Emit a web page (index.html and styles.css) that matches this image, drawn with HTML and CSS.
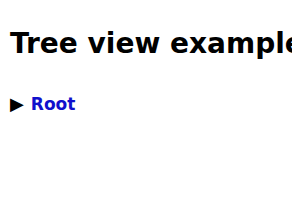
FILE: index.html
```html
<!DOCTYPE html>
<html lang="en">
<head>
    <meta charset="utf-8">
    <title>Tree view</title>
    <link rel="stylesheet" href="styles.css">
</head>
<body>
    <h1>Tree view example</h1>

    <ul class="tree">
        <li><span class="caret">Root</span></li>
    </ul>
</body>
</html>
```

FILE: styles.css
```css
body {
    margin: 8px;
    font-family: "DejaVu Sans", sans-serif;
    color: #000;
    background: #fff;
    overflow: hidden;
    white-space: nowrap;
}
h1 {
    font-size: 28px;
    font-weight: bold;
    line-height: 32px;
    margin: 20px 0 0 2px;
}
.tree {
    list-style: none;
    margin: 34px 0 0;
    padding: 0 0 0 2px;
}
.caret {
    font-size: 17px;
    font-weight: bold;
    color: #1010cc;
    cursor: pointer;
}
.caret::before {
    content: "\25B6";
    color: #000;
    display: inline-block;
    margin-right: 7px;
    font-size: 18px;
    line-height: 1;
}
```
